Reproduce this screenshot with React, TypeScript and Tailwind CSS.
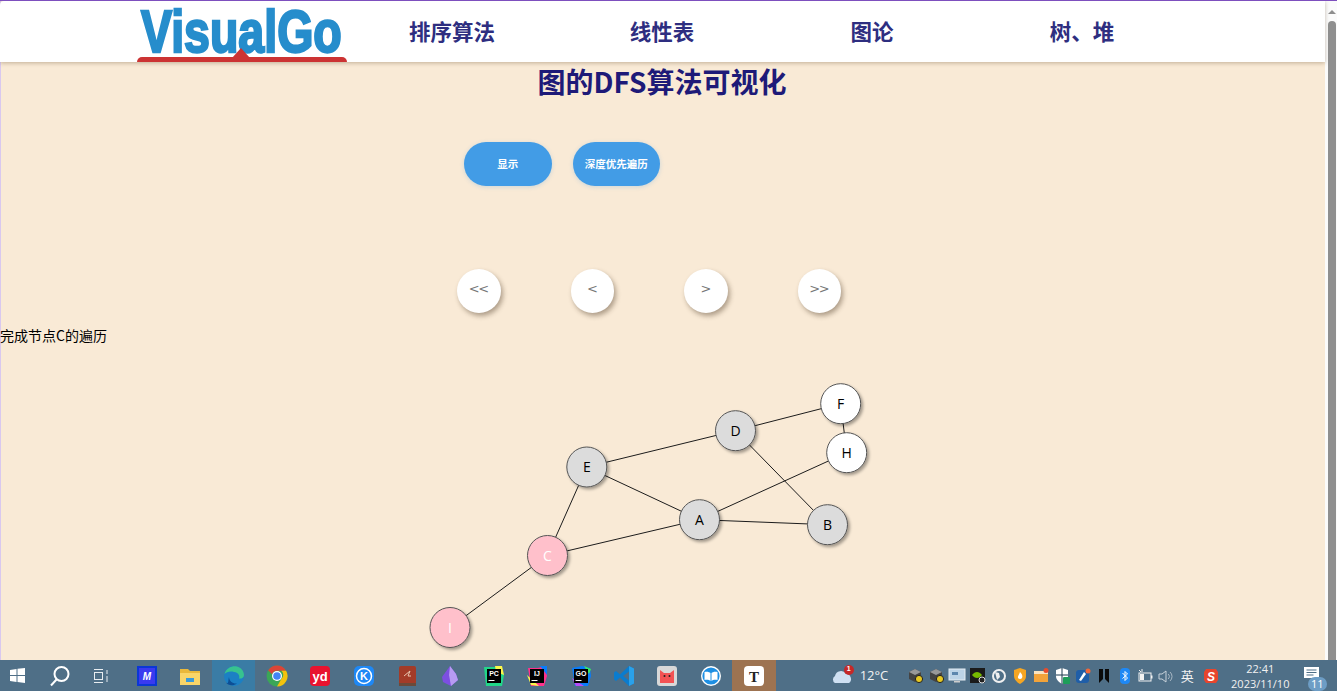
import React from "react";

const cjk = "font-['Noto_Sans_CJK_SC','Noto_Sans',sans-serif]";

const nodes: { id: string; x: number; y: number; fill: string; color: string }[] = [
  { id: "F", x: 840.7, y: 403.7, fill: "#ffffff", color: "#000" },
  { id: "H", x: 846.7, y: 452.7, fill: "#ffffff", color: "#000" },
  { id: "D", x: 735.5, y: 430.7, fill: "#dcdcdc", color: "#000" },
  { id: "E", x: 586.8, y: 467, fill: "#dcdcdc", color: "#000" },
  { id: "A", x: 699.5, y: 519.7, fill: "#dcdcdc", color: "#000" },
  { id: "B", x: 827.5, y: 524.7, fill: "#dcdcdc", color: "#000" },
  { id: "C", x: 547.5, y: 555.5, fill: "#ffc0cb", color: "#fff" },
  { id: "I", x: 450, y: 627.5, fill: "#ffc0cb", color: "#fff" },
];
const edges = ["DF", "FH", "DE", "DB", "EA", "EC", "AH", "AB", "AC", "CI"];
const OFFSET_Y = 346; // graph canvas top inside the page

function Graph() {
  const p = (id: string) => nodes.find((n) => n.id === id)!;
  return (
    <svg width="1325" height="314" viewBox={`0 ${OFFSET_Y} 1325 314`} className="block">
      <defs>
        <filter id="ns" x="-30%" y="-30%" width="170%" height="170%">
          <feDropShadow dx="2" dy="2" stdDeviation="1.6" floodColor="#000" floodOpacity="0.35" />
        </filter>
      </defs>
      {edges.map((e) => (
        <line key={e} x1={p(e[0]).x} y1={p(e[0]).y} x2={p(e[1]).x} y2={p(e[1]).y} stroke="#1c1c1c" strokeWidth="1" />
      ))}
      {nodes.map((n) => (
        <g key={n.id}>
          <circle cx={n.x} cy={n.y} r="20" fill={n.fill} stroke="#555" strokeWidth="1" filter="url(#ns)" />
          <text x={n.x} y={n.y + 5} textAnchor="middle" fontSize="14" fill={n.color} fontFamily="'Open Sans','Noto Sans',sans-serif">
            {n.id}
          </text>
        </g>
      ))}
    </svg>
  );
}

function Header() {
  return (
    <header className="relative z-10 h-[61px] shrink-0 rounded-tl-[4px] bg-white shadow-[0_1px_4px_rgba(90,60,30,0.35)]">
      <div className="ml-[137px] flex h-full w-[1050px]">
        <div className="relative h-full w-[210px]">
          <span className="absolute left-[4px] top-[1px] origin-left scale-x-[0.775] whitespace-nowrap font-['Liberation_Sans',sans-serif] text-[60px] leading-[60px] font-bold text-[#268dcc] [-webkit-text-stroke:2.5px_#268dcc]">
            VisualGo
          </span>
          <div className="absolute bottom-0 left-0 right-0 h-[5.5px] rounded-t-[5px] bg-[#cc3333]" />
          <div className="absolute bottom-[4px] left-[95px] h-0 w-0 border-x-[9px] border-b-[10px] border-x-transparent border-b-[#cc3333]" />
        </div>
        {["排序算法", "线性表", "图论", "树、堆"].map((t) => (
          <div key={t} className={`flex w-[210px] items-center justify-center pb-[1px] text-[21.5px] font-bold text-[#2e2e80] ${cjk}`}>
            {t}
          </div>
        ))}
      </div>
    </header>
  );
}

function PillButton({ label }: { label: string }) {
  return (
    <button className={`h-[44px] w-[87.5px] rounded-[22px] bg-[#429ce6] text-[10.5px] font-bold text-white shadow-[0_1px_4px_rgba(66,156,230,0.25)] ${cjk}`}>
      {label}
    </button>
  );
}

function RoundButton({ label }: { label: string }) {
  return (
    <button className="flex h-[44px] w-[43.5px] items-center justify-center rounded-full bg-white pb-[5px] pr-[1px] font-['DejaVu_Sans',sans-serif] text-[13px] tracking-[-1.5px] text-[#777777] shadow-[2px_3px_5px_rgba(60,40,20,0.4)]">
      {label}
    </button>
  );
}

function Scrollbar() {
  return (
    <div className="flex w-[12px] shrink-0 flex-col items-center bg-[#fbfbfb] pl-[1px]">
      <div className="mt-[9px] h-0 w-0 border-x-[4px] border-b-[4px] border-x-transparent border-b-[#8e8e8e]" />
      <div className="mt-[7px] w-[8px] flex-1 rounded-t-[4px] bg-[#8f8f8f]" />
    </div>
  );
}

const S = ({ children, w = 22, h = 22 }: { children: React.ReactNode; w?: number; h?: number }) => (
  <svg width={w} height={h} viewBox="0 0 22 22">{children}</svg>
);

const apps: { key: string; el: React.ReactNode; active?: string }[] = [
  { key: "ma", el: <S><rect x="1" y="1" width="20" height="20" fill="#0b37d6" /><rect x="3" y="3" width="16" height="16" fill="#3a3af0" /><text x="11" y="15" textAnchor="middle" fontSize="10" fontWeight="700" fontStyle="italic" fill="#fff" fontFamily="Liberation Sans">M</text></S> },
  { key: "folder", el: <S><path d="M1 4h8l2 2h10v14H1z" fill="#eab83a" /><path d="M1 8h20v12H1z" fill="#f9d569" /><rect x="7" y="13" width="8" height="4" fill="#3a9ad9" /><rect x="7" y="17" width="8" height="3" fill="#f9d569" /></S> },
  { key: "edge", active: "bg-[#3a7ca5]", el: <S><circle cx="11" cy="11" r="10" fill="#1c80c4" /><path d="M1.5 9C3 3 9 0.5 14 1.5c4 1 7 4.5 7 8.5 0 3-3 4-5 3.5 1-2 0-6-5-6.5C7 6 3.5 7 1.5 9z" fill="#37c28f" /><path d="M6 12c0 4 4 7 8 6.5-4 3-9 2-11-1C6 20 5 15 6 12z" fill="#0c4f96" /></S> },
  { key: "chrome", el: <S><circle cx="11" cy="11" r="10.5" fill="#3ba657" /><path d="M11 .5a10.5 10.5 0 0 1 9.1 5.2H11a5.3 5.3 0 0 0-5 3.5L2.2 5.2A10.5 10.5 0 0 1 11 .5z" fill="#dc4437" /><path d="M20.1 5.7A10.5 10.5 0 0 1 11 21.5l4.6-7.9a5.3 5.3 0 0 0-.2-7.9z" fill="#f4c20d" /><circle cx="11" cy="11" r="5" fill="#fff" /><circle cx="11" cy="11" r="3.8" fill="#4285f4" /></S> },
  { key: "yd", el: <S><rect x="1" y="1" width="20" height="20" rx="4" fill="#e8132f" /><text x="11" y="16" textAnchor="middle" fontSize="13" fontWeight="700" fill="#fff" fontFamily="Liberation Sans">yd</text></S> },
  { key: "k", el: <S><rect x="1" y="1" width="20" height="20" rx="5" fill="#1e88f5" /><circle cx="11" cy="11" r="7.5" fill="none" stroke="#fff" strokeWidth="1.5" /><text x="11" y="15" textAnchor="middle" fontSize="11" fontWeight="700" fill="#fff" fontFamily="Liberation Sans">K</text></S> },
  { key: "book", el: <S><rect x="3" y="1" width="17" height="19" rx="2" fill="#a33b28" /><rect x="3" y="18" width="17" height="3" fill="#6b4a3a" /><path d="M8 11l6-5-2 5h3" stroke="#e9c6b0" fill="none" /></S> },
  { key: "obs", el: <S><path d="M11 1l6 8 2 6-7 6-8-4-1-5z" fill="#7c4fe0" /><path d="M11 1l-1 9 2 11 7-6-2-6z" fill="#b79bf2" /></S> },
  { key: "pc", el: <S><path d="M1 2h16l4 8-2 11H3z" fill="#21d789" /><path d="M12 1h7l2 9-8-3z" fill="#fcf84a" /><rect x="4" y="4" width="14" height="14" fill="#000" /><text x="11" y="11" textAnchor="middle" fontSize="7" fontWeight="700" fill="#fff" fontFamily="Liberation Sans">PC</text><rect x="5.5" y="15" width="6" height="1" fill="#fff" /></S> },
  { key: "ij", el: <S><path d="M2 3h10l8-2 1 10-3 10H5z" fill="#ff318c" /><path d="M14 1h7v9z" fill="#087cfa" /><path d="M1 10l4 10 8 1z" fill="#fcf84a" /><rect x="4" y="4" width="14" height="14" fill="#000" /><text x="11" y="11" textAnchor="middle" fontSize="7" fontWeight="700" fill="#fff" fontFamily="Liberation Sans">IJ</text><rect x="5.5" y="15" width="6" height="1" fill="#fff" /></S> },
  { key: "go", el: <S><path d="M2 3l10-2 8 2 1 8-3 10H5z" fill="#087cfa" /><path d="M14 1l7 3-2 5z" fill="#3bea62" /><path d="M2 13l4 8 8 0z" fill="#b74af7" /><rect x="4" y="4" width="14" height="14" fill="#000" /><text x="11" y="11" textAnchor="middle" fontSize="7" fontWeight="700" fill="#fff" fontFamily="Liberation Sans">GO</text><rect x="5.5" y="15" width="6" height="1" fill="#fff" /></S> },
  { key: "vs", el: <S><path d="M16 1l5 2.5v15L16 21 7 12.5 3 16l-2-1.5V7.5L3 6l4 3.5z" fill="#0a7ccf" /><path d="M16 6.5L10 11l6 4.5z" fill="#4f6e87" /><path d="M16 1l5 2.5v15L16 21z" fill="#2aa1ea" /></S> },
  { key: "cat", el: <S><rect x="1" y="1" width="20" height="20" rx="3" fill="#d8d8d8" /><path d="M4 5l4 3h6l4-3v13H4z" fill="#f25254" /><circle cx="8.5" cy="11" r="1" fill="#222" /><circle cx="13.5" cy="11" r="1" fill="#222" /></S> },
  { key: "read", el: <S><circle cx="11" cy="11" r="10" fill="#fff" /><circle cx="11" cy="11" r="8.6" fill="#1d8fe3" /><path d="M4.5 7c2.5-.8 5 0 6 1v8c-1-1-3.5-1.6-6-1zM17.5 7c-2.5-.8-5 0-6 1v8c1-1 3.5-1.6 6-1z" fill="#fff" /></S> },
  { key: "typora", active: "bg-[#9d7351]", el: <S><rect x="1" y="1" width="20" height="20" rx="4" fill="#fff" /><text x="11" y="16.5" textAnchor="middle" fontSize="15" fontWeight="700" fill="#222" fontFamily="Liberation Serif">T</text></S> },
];

const chip = (k: string) => (
  <svg key={k} width="18" height="18" viewBox="0 0 18 18"><path d="M8 2l6 3v7l-6 3-6-3V5z" fill="#444" /><path d="M8 2l6 3-6 3-6-3z" fill="#999" /><circle cx="12" cy="12" r="3.6" fill="#e6c822" stroke="#222" /></svg>
);

const tray: React.ReactNode[] = [
  chip("a"),
  chip("b"),
  <svg key="c" width="18" height="18" viewBox="0 0 18 18"><rect x="1" y="2" width="16" height="11" fill="#bcd3e6" stroke="#e6edf3" /><rect x="4" y="5" width="6" height="3" fill="#5c86ad" /><rect x="6" y="14" width="6" height="1.5" fill="#ccc" /></svg>,
  <svg key="d" width="18" height="18" viewBox="0 0 18 18"><rect x="1" y="1" width="15" height="15" fill="#1a1a1a" /><path d="M3 8c3-4 7-4 10 0-3 4-7 4-10 0z" fill="#76b900" /><circle cx="13" cy="13" r="3" fill="#222" stroke="#ddd" /></svg>,
  <svg key="e" width="18" height="18" viewBox="0 0 18 18"><circle cx="9" cy="9" r="6" fill="none" stroke="#f0f0f0" strokeWidth="2" /><path d="M5 5l4 1 1 4-3 3z" fill="#f0f0f0" /></svg>,
  <svg key="f" width="18" height="18" viewBox="0 0 18 18"><path d="M9 1l6 2v6c0 4-3 6-6 8-3-2-6-4-6-8V3z" fill="#f5a623" /><path d="M9 5c2 2 3 4 2 6a2.5 2.5 0 0 1-4 0c-.5-2 1-3 2-6z" fill="#fff" /></svg>,
  <svg key="g" width="18" height="18" viewBox="0 0 18 18"><rect x="2" y="4" width="14" height="11" fill="#f2a33a" /><rect x="2" y="4" width="14" height="3" fill="#f9e3c0" /><circle cx="14" cy="3.5" r="2.5" fill="#e84c2b" /></svg>,
  <svg key="h" width="18" height="18" viewBox="0 0 18 18"><path d="M9 1l6 2v6c0 4-3 6-6 8-3-2-6-4-6-8V3z" fill="#fff" /><path d="M9 1v16M3 8h12" stroke="#1c3a4f" /><rect x="10" y="10" width="7" height="7" rx="1" fill="#1e9e5a" /></svg>,
  <svg key="i" width="18" height="18" viewBox="0 0 18 18"><rect x="2" y="3" width="13" height="13" rx="3" fill="#1f5ea8" /><path d="M5 13l5-8 2 2-5 7z" fill="#fff" /><circle cx="14" cy="4" r="2.5" fill="#f0683a" /></svg>,
  <svg key="j" width="18" height="18" viewBox="0 0 18 18"><path d="M4 2h4v10l-4 4zM10 2h4v14l-4-4z" fill="#0a0a0a" /></svg>,
  <svg key="k" width="18" height="18" viewBox="0 0 18 18"><rect x="4" y="1" width="10" height="16" rx="4" fill="#1e88f5" /><path d="M6.5 6l5 5-2.5 2.5v-9L11.5 7l-5 4.5" fill="none" stroke="#fff" /></svg>,
  <svg key="l" width="18" height="18" viewBox="0 0 18 18"><rect x="3" y="6" width="12" height="8" fill="none" stroke="#f2f2f2" /><rect x="4" y="7" width="4" height="6" fill="#f2f2f2" /><rect x="15" y="8.5" width="1.5" height="3" fill="#f2f2f2" /><path d="M3 3l2 2M6 2v3" stroke="#f2f2f2" /></svg>,
  <svg key="m" width="18" height="18" viewBox="0 0 18 18"><path d="M2 7h3l4-3v11l-4-3H2z" fill="none" stroke="#c8d2da" /><path d="M11 7a3 3 0 0 1 0 5M13 5a6 6 0 0 1 0 9" fill="none" stroke="#a9b8c4" /></svg>,
];

function Taskbar() {
  return (
    <footer className="relative flex h-[31px] shrink-0 bg-[#4f6f87] text-[#f2f2f2]">
      <div className="flex w-[34px] items-center justify-center">
        <svg width="15" height="15" viewBox="0 0 15 15"><path d="M0 2l6.5-1v6H0zM7.5.8L15 0v7H7.5zM0 8h6.5v6L0 13zM7.5 8H15v7l-7.5-1z" fill="#fff" /></svg>
      </div>
      <div className="flex w-[52px] items-center justify-center">
        <svg width="22" height="22" viewBox="0 0 22 22" fill="none" stroke="#fff" strokeWidth="2"><circle cx="12.5" cy="9" r="7" /><path d="M7.5 14.5l-5.5 6" /></svg>
      </div>
      <div className="flex w-[30px] items-center justify-center">
        <svg width="16" height="14" viewBox="0 0 16 14" fill="none" stroke="#e8edf1"><rect x="1.5" y="3.5" width="8" height="7" /><path d="M1 .5h9M1 13.5h9M14 1v4M14 7v6" /></svg>
      </div>
      <div className="ml-[9.3px] flex">
        {apps.map((a) => (
          <div key={a.key} className={`flex h-full w-[43.36px] items-center justify-center ${a.active ?? ""}`}>
            {a.el}
          </div>
        ))}
      </div>
      <div className="ml-[55px] flex items-center">
        <div className="relative h-[20px] w-[22px]">
          <svg width="22" height="20" viewBox="0 0 22 20"><path d="M4 17a4 4 0 0 1 0-7 6 6 0 0 1 11-2 5 5 0 0 1 3 9z" fill="#cfe0f2" /></svg>
          <span className="absolute right-[-1px] top-[-1px] flex h-[10px] w-[10px] items-center justify-center rounded-full bg-[#c62828] font-['Liberation_Sans',sans-serif] text-[7px] font-bold text-white">1</span>
        </div>
        <span className="ml-[7px] w-[36px] font-['Open_Sans',sans-serif] text-[13px] leading-none">12°C</span>
      </div>
      <div className="ml-[9.5px] flex items-center">
        {tray.map((t, i) => (
          <div key={i} className="flex h-full w-[20.9px] items-center justify-center">{t}</div>
        ))}
        <span className={`flex w-[21px] items-center justify-center text-[13px] ${cjk}`}>英</span>
        <div className="ml-[3px] flex h-full w-[21px] items-center justify-center">
          <svg width="16" height="16" viewBox="0 0 16 16"><path d="M3 1h10l2 3v8l-2 3H3l-2-3V4z" fill="#e8452c" /><text x="8" y="12.5" textAnchor="middle" fontSize="12" fontWeight="700" fontStyle="italic" fill="#fff" fontFamily="Liberation Sans">S</text></svg>
        </div>
      </div>
      <div className="ml-[7.5px] flex w-[62px] flex-col items-center justify-between pt-[1px] font-['Open_Sans',sans-serif] text-[11px] leading-[15px]">
        <span>22:41</span>
        <span className="whitespace-nowrap">2023/11/10</span>
      </div>
      <div className="relative ml-[6px] flex w-[28px] justify-center pt-[7px]">
        <svg width="15" height="14" viewBox="0 0 15 14"><path d="M0 0h15v11H0z" fill="#fff" /><path d="M2.5 3h10M2.5 5.5h10M2.5 8h7" stroke="#4f6f87" /></svg>
        <span className="absolute left-[10.5px] top-[17px] flex h-[14px] w-[19px] items-center justify-center rounded-full bg-[#6d9dc5] font-['Open_Sans',sans-serif] text-[11px] text-white">11</span>
      </div>
    </footer>
  );
}

export default function App() {
  return (
    <div className="flex h-[691px] w-[1337px] flex-col overflow-hidden border-t border-t-[#7d4fbe] bg-white">
      <div className="flex min-h-0 flex-1">
        <div className="w-[1325px] shrink-0 border-l border-l-[#d9c8ef] bg-[#f9ead6]">
          <div className="-ml-px w-[1325px]">
            <Header />
            <h1 className={`mt-[1px] pr-[1px] text-center text-[28px] leading-[36px] font-bold text-[#1e1a78] ${cjk}`}>图的DFS算法可视化</h1>
            <div className="ml-[464px] mt-[43px] flex gap-[21px]">
              <PillButton label="显示" />
              <PillButton label="深度优先遍历" />
            </div>
            <div className="ml-[457px] mt-[83px] flex gap-[70px]">
              {["<<", "<", ">", ">>"].map((l) => (
                <RoundButton key={l} label={l} />
              ))}
            </div>
            <p className={`mt-[12px] text-[14px] leading-[21px] text-black ${cjk}`}>完成节点C的遍历</p>
            <Graph />
          </div>
        </div>
        <Scrollbar />
      </div>
      <Taskbar />
    </div>
  );
}
